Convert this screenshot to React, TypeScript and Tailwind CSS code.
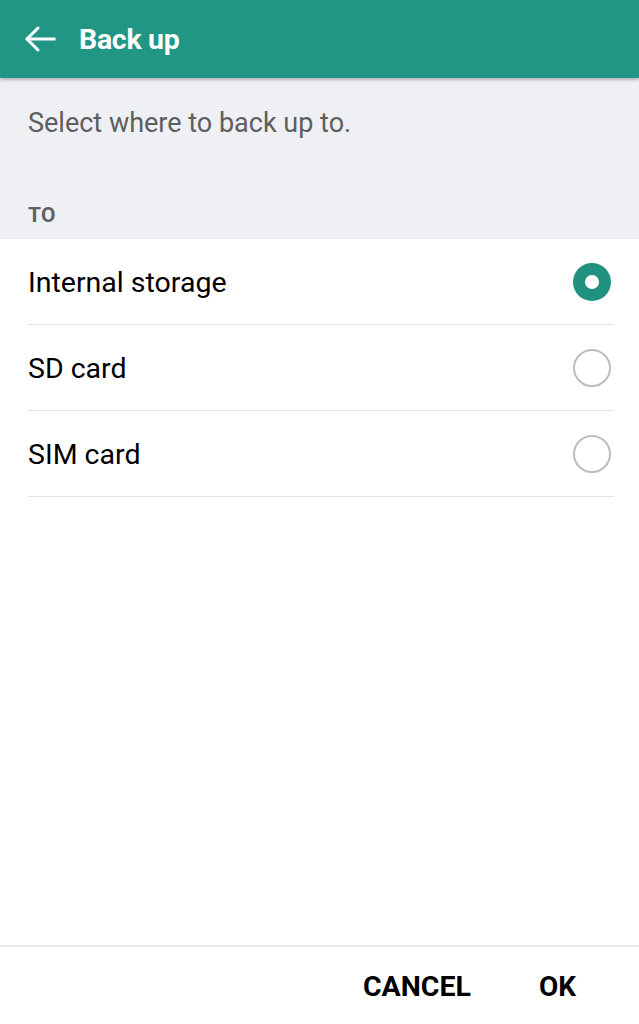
const options = [
    { label: "Internal storage", selected: true },
    { label: "SD card", selected: false },
    { label: "SIM card", selected: false },
];

const Radio = ({ selected }: { selected: boolean }) => {
    if (selected) {
        return (
            <div className="w-[38px] h-[38px] rounded-full bg-[#21927f] flex items-center justify-center">
                <div className="w-[14px] h-[14px] rounded-full bg-white" />
            </div>
        );
    }
    return <div className="w-[38px] h-[38px] rounded-full border-[2.5px] border-[#bdbdbd]" />;
};

const App = () => {
    return (
        <div className="h-screen flex flex-col bg-white font-['Roboto',sans-serif]">
            <header className="h-[78px] bg-[#219685] flex items-center pl-[24px] shadow-[0_2px_3px_rgba(0,0,0,0.25)] relative z-10">
                <svg width="32" height="28" viewBox="0 0 32 28" fill="none" stroke="white" strokeWidth="3" strokeLinecap="square">
                    <path d="M4 14 H30" />
                    <path d="M14 3 L3 14 L14 25" strokeLinecap="round" strokeLinejoin="miter" />
                </svg>
                <h1 className="ml-[23px] mt-[2px] text-[28.5px] font-bold text-white tracking-[-0.3px]">Back up</h1>
            </header>

            <section className="bg-[#eff0f4] h-[161px] px-[28px] flex flex-col">
                <p className="mt-[27px] text-[27px] text-[#5e5e5e] leading-[36px]">Select where to back up to.</p>
                <h2 className="mt-[62px] text-[21px] font-bold text-[#616161] leading-[24px] tracking-[0.3px]">TO</h2>
            </section>

            <ul className="flex-1 pl-[28px] pr-[25px]">
                {options.map((o) => (
                    <li
                        key={o.label}
                        className="h-[86px] flex items-center justify-between border-b border-[#e3e3e3] pr-[3px]"
                    >
                        <span className="text-[28.5px] text-black mt-[4px]">{o.label}</span>
                        <Radio selected={o.selected} />
                    </li>
                ))}
            </ul>

            <footer className="h-[79px] border-t-2 border-[#ececec] flex items-center justify-end pr-[63px] gap-[68px]">
                <button className="text-[28.5px] font-bold text-black mt-[3px]">CANCEL</button>
                <button className="text-[28px] font-bold text-black mt-[3px]">OK</button>
            </footer>
        </div>
    );
};

export default App;
